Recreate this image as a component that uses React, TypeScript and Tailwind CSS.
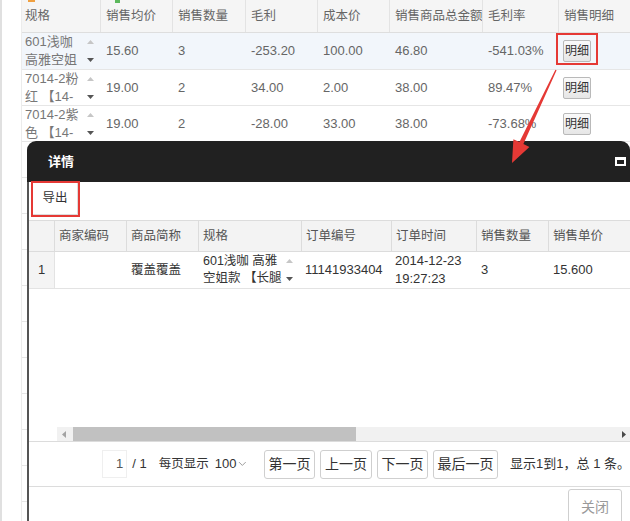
import React from "react";

const FONT = "font-['Liberation_Sans','Noto_Sans_CJK_SC',sans-serif]";

function SpinArrows({ light = "#c6c6c6", dark = "#555" }: { light?: string; dark?: string }) {
  return (
    <div className="flex flex-col justify-between items-center h-[22px] w-[9px] shrink-0">
      <svg width="7" height="4" viewBox="0 0 7 4">
        <path d="M0 4L3.5 0L7 4Z" fill={light} />
      </svg>
      <svg width="7" height="4" viewBox="0 0 7 4">
        <path d="M0 0L7 0L3.5 4Z" fill={dark} />
      </svg>
    </div>
  );
}

function DetailBtn() {
  return (
    <div className="w-[28px] h-[22px] border border-[#b9b9b9] rounded-[2px] bg-gradient-to-b from-[#fafafa] to-[#e6e6e6] flex items-center justify-center text-[12px] text-[#333] leading-none">
      明细
    </div>
  );
}

const pageCols = "grid grid-cols-[79px_72px_73px_72px_72px_93px_76px_71px]";

const pageRows = [
  { spec: ["601浅咖", "高雅空姐"], v: ["15.60", "3", "-253.20", "100.00", "46.80", "-541.03%"], h: "h-[37px]", bg: "bg-[#f2f6fb]" },
  { spec: ["7014-2粉", "红 【14-"], v: ["19.00", "2", "34.00", "2.00", "38.00", "89.47%"], h: "h-[36px]", bg: "bg-white" },
  { spec: ["7014-2紫", "色 【14-"], v: ["19.00", "2", "-28.00", "33.00", "38.00", "-73.68%"], h: "h-[36px]", bg: "bg-white" },
];

const headers = ["规格", "销售均价", "销售数量", "毛利", "成本价", "销售商品总金额", "毛利率", "销售明细"];

const dlgCols = "grid grid-cols-[26px_72px_72px_103px_90px_85px_72px_81px]";
const dlgHeaders = ["", "商家编码", "商品简称", "规格", "订单编号", "订单时间", "销售数量", "销售单价"];

export default function App() {
  return (
    <div className={`relative w-[630px] h-[521px] overflow-hidden bg-white ${FONT}`}>
      {/* underlying page */}
      <div className="flex h-full">
        <div className="w-[22px] shrink-0 border-l-2 border-[#e0e0e0] border-r border-r-[#ececec] bg-white" />
        <div className="w-[608px] flex flex-col">
          <div className={`${pageCols} h-[33px] shrink-0 bg-[#f5f5f5] border-b border-[#dedede] relative`}>
            <span className="absolute left-[6px] top-0 w-[7px] h-[2px] bg-[#f0a040]" />
            <span className="absolute left-[93px] top-0 w-[5px] h-[3px] bg-[#5cb85c]" />
            {headers.map((h, i) => (
              <div
                key={i}
                className={`flex items-center ${i === 0 ? "pl-[3px]" : "pl-[5px]"} text-[12.5px] text-[#666] whitespace-nowrap overflow-hidden ${i < 7 ? "border-r border-[#e3e3e3]" : ""}`}
              >
                {h}
              </div>
            ))}
          </div>
          {pageRows.map((r, ri) => (
            <div key={ri} className={`${pageCols} ${r.h} shrink-0 ${r.bg} border-b border-[#e6e6e6]`}>
              <div className="flex items-center pl-[3px] pr-[6px] overflow-hidden">
                <div className="flex-1 text-[13px] leading-[18px] text-[#777] whitespace-nowrap overflow-hidden">
                  {r.spec[0]}
                  <br />
                  {r.spec[1]}
                </div>
                <SpinArrows />
              </div>
              {r.v.map((v, vi) => (
                <div key={vi} className="flex items-center pl-[5px] text-[13px] text-[#666] whitespace-nowrap overflow-hidden">
                  {v}
                </div>
              ))}
              <div className="flex items-center pl-[4px]">
                <DetailBtn />
              </div>
            </div>
          ))}
          {[0, 1, 2, 3, 4, 5, 6, 7, 8, 9, 10].map((i) => (
            <div key={i} className="h-[36px] border-b border-[#e6e6e6] shrink-0" />
          ))}
        </div>
      </div>

      {/* dialog */}
      <div className="absolute left-[27px] top-[141px] w-[603px] h-[386px] flex flex-col">
        <div className="h-[41px] shrink-0 bg-[#212121] rounded-t-[9px] flex items-center justify-between pl-[21px] pr-[4px]">
          <span className="text-white font-bold text-[13px]">详情</span>
          <div className="w-[11px] h-[9px] bg-white flex items-center justify-center">
            <div className="w-[7px] h-[4px] bg-[#212121]" />
          </div>
        </div>
        <div className="flex-1 min-h-0 border-l-2 border-[#555] bg-white flex flex-col">
          {/* toolbar */}
          <div className="h-[38px] shrink-0 pl-[4px]">
            <div className="w-[45px] h-[33px] border-b border-r border-[#dcdcdc] flex items-center justify-center text-[12.5px] text-[#333]">
              导出
            </div>
          </div>
          {/* table header */}
          <div className={`${dlgCols} h-[32px] shrink-0 bg-[#f3f3f3] border-y border-[#dcdcdc]`}>
            {dlgHeaders.map((h, i) => (
              <div
                key={i}
                className={`flex items-center pl-[4px] text-[12.5px] text-[#555] whitespace-nowrap overflow-hidden ${i < 7 ? "border-r border-[#dcdcdc]" : ""}`}
              >
                {h}
              </div>
            ))}
          </div>
          {/* data row */}
          <div className={`${dlgCols} h-[37px] shrink-0 border-b border-[#e3e3e3] text-[#333]`}>
            <div className="flex items-center pl-[9px] text-[13px] bg-[#f4f4f4] border-r border-[#e3e3e3]">1</div>
            <div />
            <div className="flex items-center pl-[4px] text-[12.5px]">覆盖覆盖</div>
            <div className="flex items-center pl-[4px] pr-[8px] overflow-hidden">
              <div className="flex-1 text-[12.5px] leading-[17px] whitespace-nowrap overflow-hidden">
                601浅咖 高雅
                <br />
                空姐款 【长腿
              </div>
              <SpinArrows />
            </div>
            <div className="flex items-center pl-[3px] text-[13px] whitespace-nowrap">11141933404</div>
            <div className="flex items-center pl-[3px] text-[13px] leading-[18px] whitespace-nowrap">
              2014-12-23
              <br />
              19:27:23
            </div>
            <div className="flex items-center pl-[4px] text-[13px]">3</div>
            <div className="flex items-center pl-[4px] text-[13px]">15.600</div>
          </div>
          <div className="flex-1" />
          {/* horizontal scrollbar */}
          <div className="h-[15px] shrink-0 flex border-b border-[#dcdcdc]">
            <div className="w-[28px] shrink-0" />
            <div className="flex-1 bg-[#f1f1f1] flex items-stretch">
              <div className="w-[14px] flex items-center justify-center">
                <svg width="4" height="7" viewBox="0 0 4 7">
                  <path d="M4 0L0 3.5L4 7Z" fill="#a3a3a3" />
                </svg>
              </div>
              <div className="ml-[2px] w-[283px] bg-[#c1c1c1]" />
              <div className="flex-1" />
              <div className="w-[12px] flex items-center justify-center">
                <svg width="4" height="7" viewBox="0 0 4 7">
                  <path d="M0 0L4 3.5L0 7Z" fill="#4a4a4a" />
                </svg>
              </div>
            </div>
          </div>
          {/* pager */}
          <div className="h-[45px] shrink-0 flex items-center border-b border-[#dcdcdc] text-[#333] whitespace-nowrap">
            <div className="ml-[73px] w-[26px] h-[28px] border border-[#efefef] flex items-center justify-end pr-[3px] text-[13px] text-[#555]">
              1
            </div>
            <span className="ml-[5px] text-[13px]">/ 1</span>
            <span className="ml-[12px] text-[12.5px]">每页显示</span>
            <span className="ml-[6px] text-[13px]">100</span>
            <svg className="ml-[2px]" width="9" height="6" viewBox="0 0 9 6">
              <path d="M1 1L4.5 4.5L8 1" stroke="#999" strokeWidth="1" fill="none" />
            </svg>
            <div className="ml-[17px] flex gap-[5px]">
              {[
                ["第一页", "w-[51px]"],
                ["上一页", "w-[52px]"],
                ["下一页", "w-[51px]"],
                ["最后一页", "w-[65px]"],
              ].map(([t, w]) => (
                <div
                  key={t}
                  className={`${w} h-[29px] border border-[#cfcfcf] rounded-[3px] bg-white flex items-center justify-center text-[14px] text-[#333]`}
                >
                  {t}
                </div>
              ))}
            </div>
            <span className="ml-[12px] text-[13px]">显示1到1，总 1 条。</span>
          </div>
          {/* footer */}
          <div className="h-[40px] shrink-0 flex justify-end pr-[8px] pt-[2px]">
            <div className="w-[54px] h-[40px] border border-[#cfcfcf] rounded-[3px] flex justify-center pt-[8px] text-[14px] leading-[18px] text-[#999]">
              关闭
            </div>
          </div>
        </div>
      </div>

      {/* annotations */}
      <div className="absolute left-[556px] top-[33px] w-[42px] h-[32px] border-2 border-[#e53935]" />
      <div className="absolute left-[31px] top-[181px] w-[49px] h-[36px] border-2 border-[#e53935]" />
      <svg className="absolute left-0 top-0 pointer-events-none" width="630" height="521" viewBox="0 0 630 521">
        <polygon
          points="556.6,70.3 523.4,144.1 529.4,146.9 512,163 513.4,139.3 519.4,142.1 555.4,69.7"
          fill="#e53935"
        />
      </svg>
    </div>
  );
}
